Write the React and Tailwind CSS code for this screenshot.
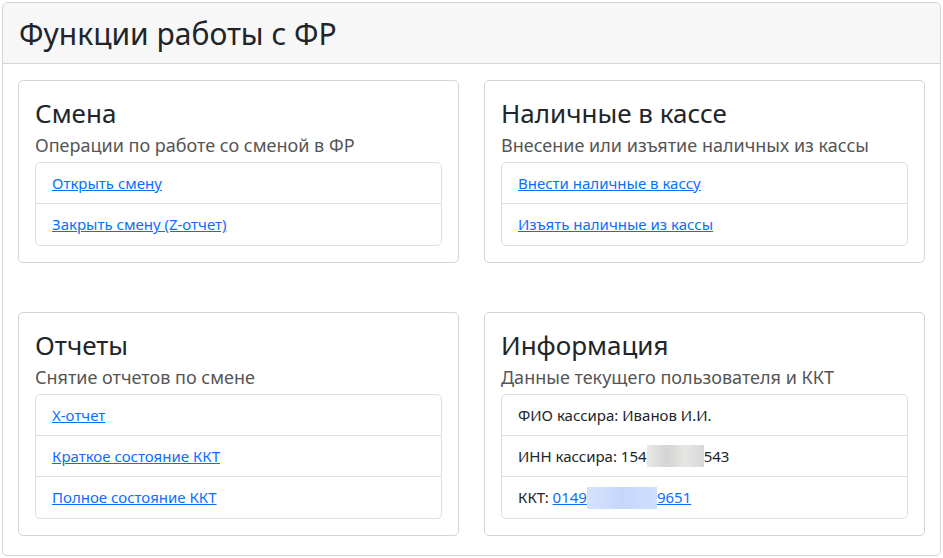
const F = { fontFamily: '"Noto Sans", "Open Sans", sans-serif' };

function Card({ title, sub, children }) {
  return (
    <div className="border border-[#d4d4d4] rounded-[5px] px-4 pt-[14px] pb-4">
      <div className="text-[26px] leading-[36px] text-[#212529]">{title}</div>
      <div className="text-[18px] leading-[26px] text-[#555] mt-[1px] mb-[4px] whitespace-nowrap">{sub}</div>
      <div className="border border-[#dfdfe3] rounded-[5px]">{children}</div>
    </div>
  );
}
function Item({ children, last }) {
  return (
    <div className={"h-[41px] flex items-center px-4 text-[15px] text-[#212529] " + (last ? "" : "border-b border-[#dfdfe3]")}>
      {children}
    </div>
  );
}
const A = ({ children }) => <a href="#" className="text-[#0d6efd] underline">{children}</a>;
const Blur = ({ w, blue }) => (
  <span className={"inline-block h-[22px] align-middle " + (blue ? "bg-[linear-gradient(90deg,#d6e3fd,#c4d7fb,#cfdffc)]" : "bg-[linear-gradient(90deg,#e8e8e8,#d4d4d4,#e6e6e4,#d8d8d8)]")} style={{ width: w }} />
);

export default function App() {
  return (
    <div style={F} className="p-[2px] bg-white w-[943px] h-[558px]">
      <div className="border border-[#d4d4d4] rounded-[5px] h-[554px] overflow-hidden">
        <div className="bg-[#f7f7f7] border-b border-[#d4d4d4] h-[61px] flex items-center px-4 text-[30px] text-[#212529]">Функции работы с ФР</div>
        <div className="grid grid-cols-2 gap-x-[25px] gap-y-[49px] px-[15px] pt-4">
          <Card title="Смена" sub="Операции по работе со сменой в ФР">
            <Item><A>Открыть смену</A></Item>
            <Item last><A>Закрыть смену (Z-отчет)</A></Item>
          </Card>
          <Card title="Наличные в кассе" sub="Внесение или изъятие наличных из кассы">
            <Item><A>Внести наличные в кассу</A></Item>
            <Item last><A>Изъять наличные из кассы</A></Item>
          </Card>
          <Card title="Отчеты" sub="Снятие отчетов по смене">
            <Item><A>X-отчет</A></Item>
            <Item><A>Краткое состояние ККТ</A></Item>
            <Item last><A>Полное состояние ККТ</A></Item>
          </Card>
          <Card title="Информация" sub="Данные текущего пользователя и ККТ">
            <Item>ФИО кассира: Иванов И.И.</Item>
            <Item>ИНН кассира: 154<Blur w={57} />543</Item>
            <Item last><span>ККТ:&nbsp;</span><a href="#" className="text-[#0d6efd] underline">0149<Blur w={70} blue />9651</a></Item>
          </Card>
        </div>
      </div>
    </div>
  );
}
